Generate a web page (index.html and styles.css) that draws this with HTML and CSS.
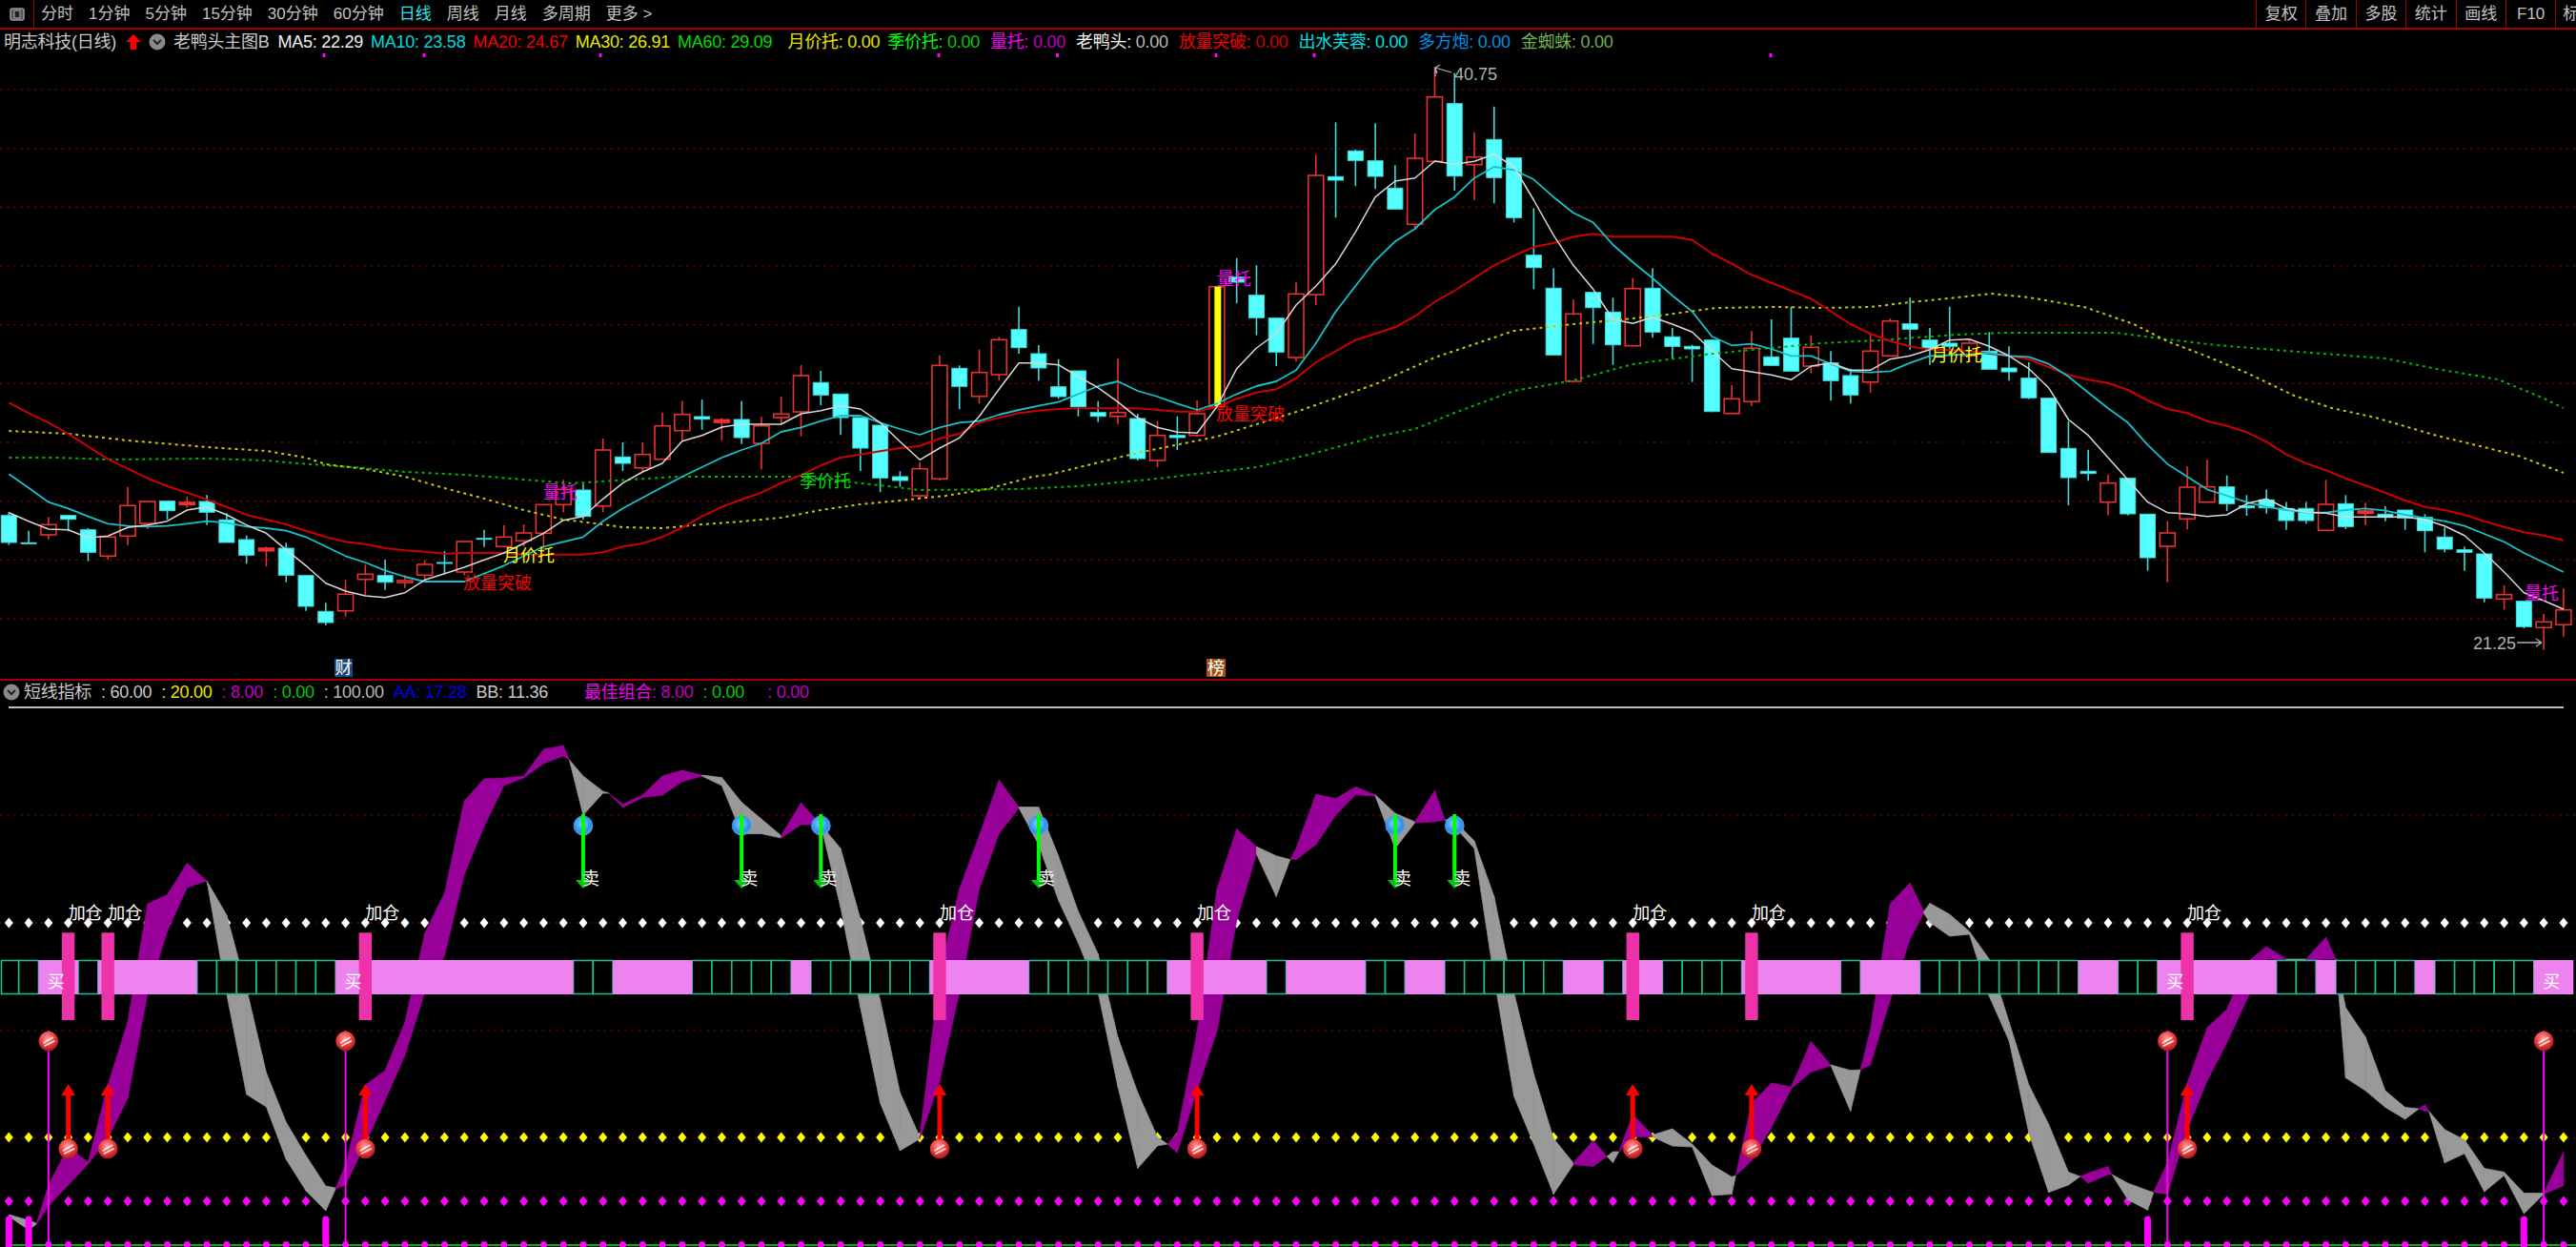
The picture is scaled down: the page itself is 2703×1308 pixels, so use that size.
FILE: index.html
```html
<!DOCTYPE html>
<html lang="zh-CN">
<head>
<meta charset="utf-8">
<title>明志科技 日线</title>
<link rel="stylesheet" href="styles.css">
</head>
<body>
<header class="toolbar">
  <nav class="periods">
    <span class="panel-btn"><svg class="panel-icon" viewBox="0 0 16 14"><rect x="1" y="1" width="14" height="12" rx="2" class="panel-frame"/><rect x="5" y="3" width="6" height="8" class="panel-fill"/></svg></span>
    <span>分时</span><span>1分钟</span><span>5分钟</span><span>15分钟</span><span>30分钟</span><span>60分钟</span>
    <span class="active">日线</span><span>周线</span><span>月线</span><span>多周期</span><span>更多 &gt;</span>
  </nav>
  <nav class="tools">
    <span>复权</span><span>叠加</span><span>多股</span><span>统计</span><span>画线</span><span>F10</span><span class="tool-last">标</span>
  </nav>
</header>
<section class="legend legend-main">
  <span class="w-name">明志科技(日线)</span>
  <svg class="up-arrow" viewBox="0 0 16 16"><path d="M8 0 L16 8 H11 V16 H5 V8 H0 Z"/></svg>
  <svg class="chev" viewBox="0 0 18 18"><circle cx="9" cy="9" r="8.5"/><path d="M5 7 L9 11 L13 7"/></svg>
  <span class="w-name gap-r">老鸭头主图B</span>
  <span class="c-white">MA5: 22.29</span>
  <span class="c-cyan">MA10: 23.58</span>
  <span class="c-red">MA20: 24.67</span>
  <span class="c-yellow">MA30: 26.91</span>
  <span class="c-green">MA60: 29.09</span>
  <span class="c-gold gap-l">月价托: 0.00</span>
  <span class="c-lime">季价托: <i class="v-green">0.00</i></span>
  <span class="c-magenta gap-s">量托: <i class="v-magenta">0.00</i></span>
  <span class="c-white gap-s">老鸭头: <i class="v-gray">0.00</i></span>
  <span class="c-red gap-s">放量突破: <i class="v-red">0.00</i></span>
  <span class="c-aqua gap-s">出水芙蓉: 0.00</span>
  <span class="c-blue gap-s">多方炮: 0.00</span>
  <span class="c-olive gap-s">金蜘蛛: 0.00</span>
</section>
<svg id="main" class="chart chart-main" viewBox="0 56 2703 656"></svg>
<section class="legend legend-sub">
  <svg class="chev" viewBox="0 0 18 18"><circle cx="9" cy="9" r="8.5"/><path d="M5 7 L9 11 L13 7"/></svg>
  <span class="w-name">短线指标</span>
  <span class="w-name">: 60.00</span>
  <span class="c-yellow">: 20.00</span>
  <span class="v-magenta">: 8.00</span>
  <span class="v-green">: 0.00</span>
  <span class="v-gray">: 100.00</span>
  <span class="c-navy">AA: 17.28</span>
  <span class="w-name">BB: 11.36</span>
  <span class="c-magenta gap-xl">最佳组合<i class="v-magenta">: 8.00</i></span>
  <span class="v-green">: 0.00</span>
  <span class="v-magenta gap-lg">: 0.00</span>
</section>
<svg id="sub" class="chart chart-sub" viewBox="0 737 2703 571">
  <defs>
    <radialGradient id="ball-red" cx="45%" cy="35%" r="70%">
      <stop offset="0" stop-color="#ff9c9c"/><stop offset="0.55" stop-color="#e83a3a"/><stop offset="1" stop-color="#9c1414"/>
    </radialGradient>
    <radialGradient id="ball-blue" cx="45%" cy="40%" r="70%">
      <stop offset="0" stop-color="#8fd0ff"/><stop offset="0.6" stop-color="#2a90f0"/><stop offset="1" stop-color="#7fa8c8"/>
    </radialGradient>
  </defs>
</svg>
<script src="chart.js"></script>
</body>
</html>
```
FILE: styles.css
```css
* { box-sizing: border-box; }
html, body { margin: 0; padding: 0; background: #000; }
body {
  width: 2703px;
  height: 1308px;
  overflow: hidden;
  font: 17px/1 "Liberation Sans", "Noto Sans CJK SC", sans-serif;
  color: #c0c0c0;
}
i { font-style: normal; }

.toolbar {
  display: grid;
  grid-template-columns: 2367px 1fr;
  height: 31px;
  border-bottom: 2px solid #a00000;
}
.periods { display: flex; align-items: center; gap: 16px; }
.periods .active { color: #2ee6e6; }
.panel-btn {
  display: flex;
  align-items: center;
  justify-content: center;
  width: 36px;
  height: 100%;
  border-right: 1px solid #a00000;
  margin-right: -9px;
}
.panel-icon { width: 16px; height: 14px; }
.panel-frame { fill: #555; stroke: #999; stroke-width: 1.5; }
.panel-fill { fill: #222; stroke: #aaa; }
.tools { display: flex; overflow: hidden; }
.tools span {
  flex: 0 0 52.4px;
  display: flex;
  align-items: center;
  justify-content: center;
  border-left: 1px solid #a00000;
  white-space: nowrap;
}
.tools .tool-last { flex: 0 0 22px; justify-content: flex-start; padding-left: 7px; }

.legend { display: flex; align-items: center; white-space: pre; font-size: 18px; letter-spacing: -0.25px; }
.legend-main { height: 25px; gap: 8px; padding-left: 4px; }
.legend-sub {
  height: 25px;
  gap: 10px;
  padding-left: 1px;
  border-top: 2px solid #a00000;
}
.legend-sub .chev { margin-right: -6px; margin-left: 2px; }
.up-arrow { width: 16px; height: 16px; margin: 0 0 0 2px; fill: #ff0000; }
.chev { width: 18px; height: 18px; }
.chev circle { fill: #8a8a8a; }
.chev path { fill: none; stroke: #222; stroke-width: 2; }
.gap-r { margin-right: 1px; }
.gap-l { margin-left: 8px; }
.gap-s { margin-left: 3px; }
.gap-xl { margin-left: 28px; }
.gap-lg { margin-left: 14px; }

.w-name { color: #c8c8c8; }
.c-white { color: #f0f0f0; }
.c-cyan { color: #00dcdc; }
.c-red { color: #f00000; }
.c-yellow { color: #e8e800; }
.c-green { color: #00dc00; }
.c-gold { color: #e8e000; }
.c-lime { color: #00ff00; }
.c-magenta { color: #f000f0; }
.c-aqua { color: #00e0e0; }
.c-blue { color: #0090e0; }
.c-olive { color: #70b050; }
.c-navy { color: #0000e0; }
.v-green { color: #00cc00; }
.v-magenta { color: #c000c0; }
.v-gray { color: #b8b8b8; }
.v-red { color: #d00000; }

.chart { display: block; width: 2703px; }
.chart-main { height: 656px; }
.chart-sub { height: 571px; }

.grid { stroke: #900000; stroke-width: 1.2; stroke-dasharray: 2 5.2; fill: none; }
.wick-up { stroke: #e83030; stroke-width: 1.6; }
.wick-down { stroke: #3cdcdc; stroke-width: 1.6; }
.body-up { fill: #000; stroke: #e83030; stroke-width: 1.6; }
.body-up-solid { fill: #f03030; stroke: #f03030; stroke-width: 1.6; }
.body-down { fill: #55ffff; stroke: #3cdcdc; stroke-width: 1; }
.spike { fill: #ffff00; }
.tick { fill: #ff00ff; }

.line { fill: none; stroke-linejoin: round; }
.ma5 { stroke: #d8d8d8; stroke-width: 1.5; }
.ma10 { stroke: #18c0c8; stroke-width: 1.8; }
.ma20 { stroke: #cc0000; stroke-width: 2; }
.ma30 { stroke: #c8c800; stroke-width: 2; stroke-dasharray: 3 4; }
.ma60 { stroke: #00b400; stroke-width: 2; stroke-dasharray: 3 4; }

.lbl { font: 18px "Noto Sans CJK SC", "Liberation Sans", sans-serif; }
.lbl-red { fill: #ff0000; }
.lbl-yellow { fill: #ffff00; }
.lbl-green { fill: #00e000; }
.lbl-magenta { fill: #ff00ff; }
.lbl-white { fill: #ffffff; }
.lbl-gray { fill: #b0b0b0; font-family: "Liberation Sans", sans-serif; }
.pointer { fill: none; stroke: #b0b0b0; stroke-width: 1.3; }
.badge-blue { fill: #174a80; }
.badge-brown { fill: #a0500f; }

.rule { stroke: #c0c0c0; stroke-width: 2; }
.baseline { stroke: #00b400; stroke-width: 2; }
.dot-white { fill: #fff; }
.dot-yellow { fill: #ffff00; }
.dot-magenta { fill: #ff00ff; }
.band-p { fill: #990099; stroke: #990099; stroke-width: 0.7; }
.band-g { fill: #999999; stroke: #999999; stroke-width: 0.7; }
.cell-on { fill: #ee82ee; }
.cell-off { fill: #000; stroke: #1fb896; stroke-width: 1.6; }
.bar-hot { fill: #ee33aa; }
.stem { stroke: #ff00ff; stroke-width: 2; }
.stub { stroke: #ff00ff; stroke-width: 7; stroke-linecap: round; }
.arrow-up-shaft { stroke: #ff0000; stroke-width: 5; }
.arrow-up-head { fill: #ff0000; }
.arrow-dn-shaft { stroke: #00ff00; stroke-width: 4; }
.arrow-dn-head { fill: #00c800; }
.ball-red { fill: url(#ball-red); }
.ball-blue { fill: url(#ball-blue); }
.swirl { fill: none; stroke: #ffe0e0; stroke-width: 1.6; stroke-linecap: round; }
```
FILE: chart.js
```js
// 130 daily bars: [kind, bodyTop, bodyBottom, high, low] in chart pixels.
// c = down (solid cyan), r = up (hollow red), f = up (solid red, tiny body)
const BARS = [
['c',540.7,569,537.3,571.7],['c',569.3,570.3,556.7,570.3],['r',550.3,561,542.3,565.7],['c',540.7,544.7,540.7,557.3],['c',555.7,579.3,554,588.7],
['r',563.3,583.3,562.3,586.7],['r',530.3,562.3,510.7,571.7],['r',526,549,526,555],['c',525.7,535.7,525.7,545],['f',527,529.3,520.7,532.7],
['c',526,537.3,519.3,550.7],['c',545.3,569,538.3,569],['c',566,582.3,561.7,591.3],['f',575,577.7,573.3,594.3],['c',575,603.3,569.3,610.7],
['c',603.7,636,603.7,640.7],['c',641.3,653,632.3,656],['r',623.3,640.7,608.3,646.7],['r',602.3,607.7,592.3,624],['c',603.7,610.7,587,618.7],
['r',609,611,603.3,616.7],['r',592,603.3,587.3,610],['c',590,591,578,601.7],['r',568,600,568,603.3],['c',564.7,565.7,555.7,573.7],
['r',563.3,573.3,551,574.3],['r',559,567.3,550,573.3],['r',529.3,559.3,529,576.7],['r',513.3,529.3,503.3,537.3],['c',514,541.7,507.3,545],
['r',472,530.7,460,537.3],['c',479.3,486,464,494],['r',476.7,490.7,464,494],['r',446.7,481.7,432.7,482],['r',434.7,451.7,420.7,463],
['c',437,439.7,419,450.7],['f',440.3,443,438.7,462],['c',440,459,420.7,465.7],['r',446.7,465,437.3,492.3],['r',434.3,438,416,445],
['r',394,432,383,457.7],['c',401.3,414.3,389,425],['c',413.3,438,413.3,456.3],['c',438,470,438,494],['c',446,501.3,446,516.3],
['c',500,504,494.3,510.7],['r',491.7,520,485,522],['r',383.3,502.3,372.7,504.3],['c',386.3,405.3,383.3,429.3],['r',390.7,415.7,366.7,423.3],
['r',356.3,393,353.3,399.3],['c',345.7,364.7,321.7,371],['c',371,386,362,399.3],['c',405.7,416,376.7,418.3],['c',389,426.7,389,436.7],
['c',432.7,436.7,420.7,442.7],['r',432.7,436.7,375.7,445],['c',439,481,434,483],['r',456.7,483,441.7,490],['c',456.7,459,436.7,472],
['r',434,456.7,420,458],['r',300.7,426.7,300.7,426.7],['c',290.7,296,270.7,318.3],['c',309.7,333.3,278.3,351.7],['c',333.7,369.3,333.7,384],
['r',308.3,375,296,379.3],['r',184,309,162.3,320],['c',185.3,189,128.3,228.3],['c',158.3,168.3,156.7,195.3],['c',168.7,185,129.3,198.3],
['c',197.3,219.3,173.3,219.3],['r',166,235.3,140,239],['r',101.7,169.3,70,169.3],['c',108.7,184.7,76.7,200],['r',164.7,172.7,138.7,210],
['c',146.3,186.3,111.7,213.3],['c',165.7,228.3,165.7,233.3],['c',267.7,280.7,218.3,303.3],['c',302.3,372.3,281.3,372.3],['r',329.3,400,314,401],
['c',306.7,322.7,306.7,360.7],['c',327.3,361.7,312.3,382.7],['r',302.7,362.7,291.7,362.7],['c',302.3,348.3,281.3,354.3],['c',353.3,363.3,344,376],
['c',363.3,366,361.7,400.7],['c',356.7,431.7,356.7,432.3],['r',418.3,433.7,404,433.7],['r',365.3,421.3,347.3,426],['c',374.3,383.3,335,384],
['c',354.7,389.3,321.7,389.3],['r',364.3,384,351.7,391.7],['c',380.7,399.3,368.3,420.3],['c',394,414.3,386.7,423.3],['r',368.3,400.7,350,411.7],
['r',336.7,373.3,334,373.3],['c',339.7,345.3,312.3,366.7],['c',356.7,365.3,344,382.7],['c',360,363.3,321.7,371.7],['r',360,373.3,356.7,380],
['c',368.3,387.3,348.3,387.3],['c',386,390,363.3,399.3],['c',396.7,417.3,380,418.7],['c',417.7,474.7,417.7,474.7],['c',470.3,501,441.7,530],
['c',494.3,496.7,471.7,504.3],['r',506.7,526.7,497.7,540.7],['c',501.7,539,501.7,540.7],['c',539.3,585,539.3,598.7],['r',559,573,546.7,610.7],
['r',511,544.3,489.3,555.3],['r',510.7,526.7,482,526.7],['c',510.7,528.3,498.7,536],['c',530.7,532.7,519.3,541],['c',524.3,532.7,513.3,538.7],
['c',533.3,546,526.7,555.7],['c',533.3,546,526.7,549.3],['r',529,556.3,503.3,556.3],['c',528.3,552.3,519.3,555],['f',536,538.3,527.3,551],
['c',539.3,542.7,531,546.7],['c',535,543.3,535,555.7],['c',542.7,556.7,539.3,579.3],['c',563.3,576,553.3,579.3],['c',576.7,579.3,573.3,598.7],
['c',581,627.3,581,631.7],['r',623.7,628.3,614,639.3],['c',630.7,657.3,630.7,659],['r',652.3,658.3,644,681.7],['r',639.7,655.3,617.3,667.7]
];

const MA5 = [537.7,546.7,555,555.7,564,562.3,553.3,550.7,546.7,535,
531.7,540,550.7,559.3,576.7,593.3,611.7,620,625,626.7,
621.7,608.3,601.7,595,587.3,580,570,559.3,545.7,541.7,
523.3,506.7,495,486,462.7,456.7,448,445,445,445,
434,430.7,425.7,429,443.3,463.3,482.3,470,459.3,436.7,
408.3,380.7,380.7,382.7,395,406.7,421.7,438.3,448.3,453.3,
454.3,426.7,386.7,365,350,320,300,276.7,243.3,206.7,
190,186.7,169,172.3,169.3,161.7,175,210,246.7,278.3,
303.3,335,339.3,332.7,340,348.3,368,386.7,390,393.3,
398.3,384,380.7,388.3,388.3,376.7,373.3,366.7,356.7,355.7,
363.3,373.3,386.7,406.7,440,456.7,480,503.3,526.7,537.7,
539,541.7,540,528.3,523.3,533.3,537.3,538.3,542.3,542.3,
542.3,542.3,545,551.7,561.7,580,600,621.7,630,639];

const MA10 = [497.3,511.7,526.7,533.3,541.7,549.3,551.7,552.3,551.7,549.3,
546.7,548.3,552.3,554,556.7,563.3,573.3,583.3,590,598.3,
605,610,610,610,601.7,593.3,583.3,573.3,568.3,563.3,
546.7,533.3,522,511,500,490,480,472,465,453,
448.3,441.7,436,436,443.3,450,456,448.3,443.3,441.7,
435,430,425.7,421.7,413.3,405,400,410,416,423.3,
430,423.3,413.3,405,400,388.3,360,326.7,300,273.3,
253.3,240,220,206.7,186.7,175,178.3,188.3,206.7,223.3,
233.3,256.7,275,291.7,310,326.7,353,362.3,360.7,366,
373.3,373.3,381.7,389.3,390.7,389.3,380.7,373.3,372.7,371.7,
370,373.3,374.3,381.7,395,411.7,428.3,443.3,466.7,486.7,
500,513.3,520,526.7,531.7,535,537.7,537.7,535,533.3,
535.7,540,543.3,546.7,551.7,560,568.3,580,590,600];

const MA20 = [422.3,433.3,443.3,455,468.3,481.7,491.7,501.7,510,516.7,
524,531.7,540,545,550,556.7,563.3,568.3,570.7,575,
577.3,578.7,580.7,580,580,580,581.7,581.7,581.7,581.7,
579.3,573.3,570,563.3,553.3,541.7,531.7,524,516.7,506.7,
498.3,488.3,480,476.7,473.3,470,467.7,460,455,443.3,
438.3,433.3,430.7,429,428.3,428.3,428.3,428.3,430,431.7,
431.7,426.7,418.3,411.7,408.3,396.7,380,368.3,356.7,350,
343.3,331.7,316.7,305,291.7,278.3,268.3,259,255,248.3,
245.3,248.3,248.3,248.3,248.3,251.7,266,276.7,288.3,296.7,
305,313.3,326.7,340,350,357.7,363.3,366.7,367.3,368.3,
371,373.3,376.7,385,393.3,398.3,401.7,409,420,429,
433.3,441.7,446.7,453.3,463.3,476.7,486,493.3,501.7,509.3,
516.7,525,531.7,535,540,546.7,552.7,558.3,561.7,566.7];

const MA30 = [[0,452],[3,455],[6,462],[10,469],[13,473],[15,480],[16,487],[18,492],[20,500],[22,512],[24,523],[26,535],[28,545],[30,550],[31,553],[33,554],[35,550],[37,547],[39,543],[41,535],[43,529],[45,525],[47.3,520],[49.4,513],[51.7,500],[52.5,498],[57,475],[61,458],[65,432],[69,403],[72,375],[76,347],[79,340],[83,332],[86.2,323],[89.3,322],[91.7,323],[94,322],[96,317],[98.4,312],[100.1,308],[102,312],[104.8,322],[107.3,340],[109,358],[110.9,373],[113.1,392],[115.4,415],[117.3,428],[119.5,438],[122.6,457],[124.8,468],[126.7,478],[129,496]];

const MA60 = [[0,480],[2.5,480],[5,482],[10,481],[13,483],[14,485],[16,488],[18,491],[20,495],[23,498],[26,503],[28.4,507],[33.7,500],[40,500],[44.4,510],[46,514],[51,513],[54,510],[58,502],[63,490],[66,475],[69,458],[71,450],[73,433],[76,410],[79,399],[82,382],[86,371],[89,365],[91.5,360],[94.3,357],[98.4,351],[100.8,349],[106.4,349],[108.6,355],[111.5,362],[115,368],[120,376],[122.6,387],[125.7,398],[127.9,417],[129,428]];

// Ribbon between the two oscillator curves: [index, upper, lower, colour up to next row]
const p = 'band-p', g = 'band-g';
const RIBBON = [[0,1274,1276,g],[1,1280,1290,g],[1.4,1283,1284,p],[2,1243,1265,p],[3,1203,1243,p],[4,1219,1221,p],[5,1138,1194,p],[6,1072,1152,p],[7,948,1043,p],[8,938.5,977,p],[9,905.5,931,p],[10,924,924,g],[11,960,1043,g],[12,1037,1148,g],[13,1125,1161,g],[14,1177,1216,g],[15,1212,1249,g],[16,1244,1270,g],[16.5,1246,1247,p],[17,1222,1243,p],[18,1138,1200,p],[19,1123,1154,p],[20,1072,1107,p],[21,979,1041,p],[22,936.5,1002,p],[23,840,917,p],[24,817,867,p],[25,816,824,p],[26,814,816,p],[27,786,801,p],[28,782,793,p],[28.3,797,797,g],[29,814,855,g],[30,830,832,g],[30.3,832,832,p],[31,843.5,847,p],[32,834,836.5,p],[33,814,834,p],[34,808,820,p],[35,813,814,g],[36,815.6,824,g],[37,841.5,874.5,g],[38,859,874.5,g],[39,876.5,879,p],[40,842,865,p],[41,865,865,g],[42,890,952,g],[43,963.7,1056.8,g],[44,1049,1157,g],[45,1146,1207,g],[46,1192.5,1194.5,p],[47,1020,1134,p],[48,932.7,1041,p],[49,876.5,932.7,p],[50,818,874.5,p],[51,846.6,847.4,g],[52,846.6,886,g],[53,897.8,944.3,g],[54,956,989,g],[55,1000.5,1041,g],[56,1088,1140,g],[57,1146,1225.5,g],[58,1192.5,1202,g],[58.5,1200,1200,p],[59,1188.6,1209,p],[60,1082,1144,p],[61,932.7,1082,p],[62,869.5,965.6,p],[63,888,895.8,g],[64,897.8,940.4,g],[64.7,901.6,901.6,p],[65,890,901.6,p],[66,833,886,p],[67,837.7,855,p],[68,825.3,833.8,p],[69,833.8,835,g],[70,853,890,g],[71,862,863,p],[72,829,862,p],[72.5,859.8,859.8,g],[73,861,866.7,g],[74,882,890,g],[75,940.4,1025.7,g],[76,1041,1150,g],[77,1126.5,1200,g],[78,1194,1252.6,g],[79,1219.7,1221.6,p],[80,1196.4,1223.5,p],[80.7,1213,1213,g],[81,1208,1219.6,g],[81.3,1208,1208,p],[82,1169,1192.5,p],[83,1190.5,1192.5,g],[84,1184,1202,g],[85,1200,1203,g],[86,1222,1254,g],[87,1234.4,1252.6,g],[87.2,1233,1233,p],[88,1157.6,1217.7,p],[89,1136,1182.8,p],[90,1140,1142,p],[91,1092.4,1124.6,p],[92,1117,1117.7,g],[93,1122.7,1165.4,g],[93.5,1122,1122,p],[94,1080,1117,p],[95,948,1049,p],[96,926,985,p],[96.7,956,958,g],[97,947.4,967.6,g],[98,959,982,g],[99,977,980,g],[100,1006,1045,g],[101,1072,1091.7,g],[102,1138,1188.6,g],[103,1179,1250.7,g],[104,1229.4,1243,g],[104.6,1234,1234,p],[105,1230.5,1241,p],[106,1223.5,1232,p],[106.2,1232,1232,g],[107,1241,1258.4,g],[108,1248.7,1269.3,g],[108.3,1250.7,1250.7,p],[109,1219.7,1252.6,p],[110,1136,1184.8,p],[111,1078,1134,p],[112,1058.7,1093.6,p],[113,1010,1049,p],[114,992.8,1006,p],[115,1006,1006.8,g],[116,1006,1008,p],[117,983,1006,p],[117.5,1006,1006,g],[118,1056.8,1130.5,g],[119,1087.8,1144,g],[120,1144,1161.5,g],[121,1161.5,1174,g],[121.7,1163,1163,p],[122,1158.8,1165.4,p],[122.2,1165.4,1165.4,g],[123,1184.8,1219.7,g],[124,1195.6,1210,g],[125,1225.5,1250,g],[126,1229.4,1233,g],[127,1251.5,1273,g],[128,1251.5,1252.6,p],[129,1208,1243.7,p]];

const PINK_RUNS = [[2,3],[5,9],[17,28],[31,34],[40,40],[47,51],[59,63],[65,68],[71,72],[79,80],[82,83],[88,92],[94,96],[105,106],[109,114],[117,117],[122,122],[128,129]];
const ADD_POS = [3,5,18,47,60,82,88,110];
const BUY_BALL = [2,17,109,128];
const BUY_TEXT = [2,17,109,128];
const SELL = [29,37,41,52,70,73];
const STUBS = [0,1,16,108,127];

const X = i => 9.3 + 20.78 * i;
const NS = 'http://www.w3.org/2000/svg';
function el(parent, tag, attrs, text) {
  const n = document.createElementNS(NS, tag);
  for (const k in attrs) n.setAttribute(k === 'cls' ? 'class' : k, attrs[k]);
  if (text) n.textContent = text;
  parent.appendChild(n);
  return n;
}
const hline = (s, y, cls, x1 = 0, x2 = 2703) => el(s, 'line', { x1, x2, y1: y, y2: y, cls });
const label = (s, x, y, t, cls) => el(s, 'text', { x, y, cls: 'lbl ' + cls }, t);

/* ---------- price chart ---------- */
const main = document.getElementById('main');
for (let k = 0; k < 10; k++) hline(main, 94 + 61.67 * k, 'grid');
[340, 445, 630, 985, 1109.5, 1276, 1379, 1858].forEach(x =>
  el(main, 'rect', { x: x - 1.5, y: 56, width: 3, height: 4, cls: 'tick' }));

BARS.forEach((b, i) => {
  const [kind, top, bot, hi, lo] = b;
  const x = X(i);
  const down = kind === 'c';
  const wick = down ? 'wick-down' : 'wick-up';
  if (hi < top) el(main, 'line', { x1: x, x2: x, y1: hi, y2: top, cls: wick });
  if (lo > bot) el(main, 'line', { x1: x, x2: x, y1: bot, y2: lo, cls: wick });
  el(main, 'rect', {
    x: x - 8, y: top, width: 16, height: Math.max(bot - top, 1),
    cls: down ? 'body-down' : kind === 'f' ? 'body-up-solid' : 'body-up'
  });
});
el(main, 'rect', { x: 1274.3, y: 300.7, width: 7, height: 125.5, cls: 'spike' });

const series = arr => arr.map((y, i) => `${X(i).toFixed(1)},${y}`).join(' ');
const knots = arr => arr.map(([i, y]) => `${X(i).toFixed(1)},${y}`).join(' ');
el(main, 'polyline', { points: knots(MA60), cls: 'line ma60' });
el(main, 'polyline', { points: knots(MA30), cls: 'line ma30' });
el(main, 'polyline', { points: series(MA20), cls: 'line ma20' });
el(main, 'polyline', { points: series(MA10), cls: 'line ma10' });
el(main, 'polyline', { points: series(MA5), cls: 'line ma5' });

[[486, 618], [1276, 441]].forEach(([x, y]) => label(main, x, y, '放量突破', 'lbl-red'));
[[528, 589], [2026, 379]].forEach(([x, y]) => label(main, x, y, '月价托', 'lbl-yellow'));
label(main, 839, 511, '季价托', 'lbl-green');
[[570, 523], [1277, 299], [2649, 629]].forEach(([x, y]) => label(main, x, y, '量托', 'lbl-magenta'));

label(main, 1526, 84, '40.75', 'lbl-gray');
el(main, 'path', { d: 'M1523 76 L1506 71 M1506 71 L1511 68 M1506 71 L1508 77 M1506 71 V80', cls: 'pointer' });
label(main, 2595, 681, '21.25', 'lbl-gray');
el(main, 'path', { d: 'M2641 674 H2667 M2667 674 L2661 670 M2667 674 L2661 678', cls: 'pointer' });

el(main, 'rect', { x: 351, y: 691, width: 19, height: 19, cls: 'badge-blue' });
label(main, 351.5, 707, '财', 'lbl-white');
el(main, 'rect', { x: 1266, y: 691, width: 20, height: 19, cls: 'badge-brown' });
label(main, 1267, 707, '榜', 'lbl-white');

/* ---------- oscillator ---------- */
const sub = document.getElementById('sub');
[855, 968, 1081, 1194].forEach(y => hline(sub, y, 'grid'));
hline(sub, 742, 'rule', 9, 2690);
hline(sub, 1306, 'baseline', 6, 2703);

const diamond = (x, y, cls) => el(sub, 'polygon', {
  points: `${x},${y - 5.5} ${x + 4.5},${y} ${x},${y + 5.5} ${x - 4.5},${y}`, cls });
for (let i = 0; i < 130; i++) {
  const x = X(i);
  diamond(x, 968, 'dot-white');
  diamond(x, 1193, 'dot-yellow');
  diamond(x, 1260, 'dot-magenta');
  el(sub, 'circle', { cx: x, cy: 1305.5, r: 3.6, cls: 'dot-magenta' });
}

for (let n = 0; n < RIBBON.length - 1; n++) {
  const [a, t1, b1, c] = RIBBON[n];
  const [e, t2, b2] = RIBBON[n + 1];
  el(sub, 'polygon', {
    points: `${X(a).toFixed(1)},${t1} ${X(e).toFixed(1)},${t2} ${X(e).toFixed(1)},${b2} ${X(a).toFixed(1)},${b1}`,
    cls: c
  });
}

// Signal strip: one rectangle per bar for idle days, merged runs for active days.
const isPink = i => PINK_RUNS.some(([a, b]) => i >= a && i <= b);
const cellLeft = i => Math.max(X(i) - 10.39, 1.5);
for (let i = 0; i < 130; i++) {
  if (isPink(i)) continue;
  el(sub, 'rect', { x: cellLeft(i), y: 1007.5, width: X(i) + 10.39 - cellLeft(i), height: 35, cls: 'cell-off' });
}
PINK_RUNS.forEach(([a, b]) =>
  el(sub, 'rect', { x: cellLeft(a), y: 1007, width: X(b) + 10.39 - cellLeft(a), height: 36, cls: 'cell-on' }));

STUBS.forEach(i => el(sub, 'line', { x1: X(i), x2: X(i), y1: 1279, y2: 1306, cls: 'stub' }));

function redBall(x, y) {
  el(sub, 'circle', { cx: x, cy: y, r: 10.3, cls: 'ball-red' });
  el(sub, 'path', {
    d: `M${x - 5} ${y + 2} L${x + 5} ${y - 4} L${x - 3} ${y + 0} M${x - 4} ${y + 5} L${x + 6} ${y}`,
    cls: 'swirl'
  });
}

BUY_BALL.forEach(i => {
  const x = X(i);
  el(sub, 'line', { x1: x, x2: x, y1: 1081, y2: 1306, cls: 'stem' });
  redBall(x, 1092);
});

ADD_POS.forEach(i => {
  const x = X(i);
  el(sub, 'rect', { x: x - 6.7, y: 978.3, width: 13.4, height: 91.7, cls: 'bar-hot' });
  el(sub, 'line', { x1: x, x2: x, y1: 1147, y2: 1197, cls: 'arrow-up-shaft' });
  el(sub, 'polygon', { points: `${x},1137 ${x + 7.3},1149 ${x - 7.3},1149`, cls: 'arrow-up-head' });
  redBall(x, 1205);
  label(sub, x, 964, '加仓', 'lbl-white');
});

BUY_TEXT.forEach(i => label(sub, X(i) - 1, 1036, '买', 'lbl-white'));

SELL.forEach(i => {
  const x = X(i);
  el(sub, 'circle', { cx: x, cy: 866, r: 10.4, cls: 'ball-blue' });
  el(sub, 'line', { x1: x, x2: x, y1: 854, y2: 924, cls: 'arrow-dn-shaft' });
  el(sub, 'polygon', { points: `${x - 8},923 ${x + 8},923 ${x},932`, cls: 'arrow-dn-head' });
  label(sub, x - 1, 928, '卖', 'lbl-white');
});
```
